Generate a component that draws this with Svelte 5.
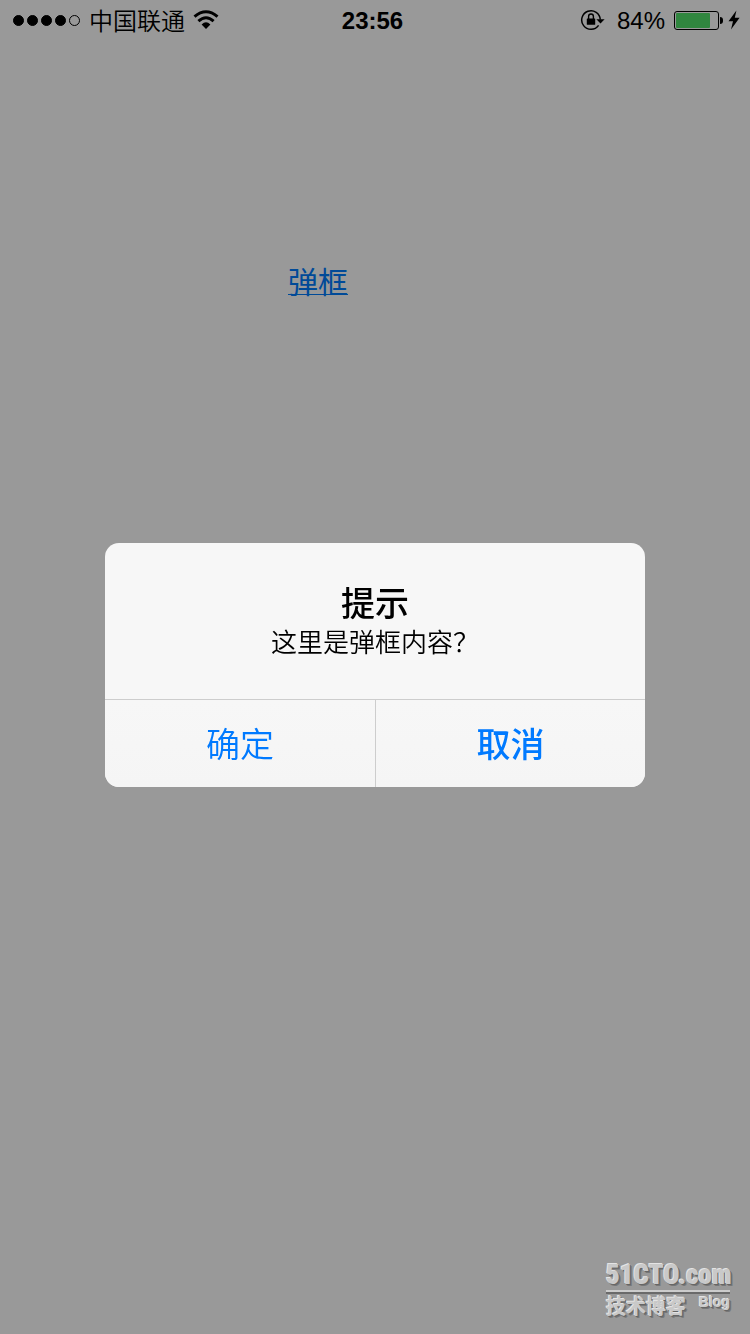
<script lang="ts">
  interface Props {
    carrier?: string;
    time?: string;
    battery?: number;
  }

  let { carrier = '中国联通', time = '23:56', battery = 84 }: Props = $props();

  let open = $state(true);

  const signal = [true, true, true, true, false];

  function show(event: MouseEvent) {
    event.preventDefault();
    open = true;
  }

  function close() {
    open = false;
  }
</script>

<div class="screen">
  <header class="status-bar">
    <div class="status-left">
      <span class="signal">
        {#each signal as on}
          <span class="signal-dot" class:on></span>
        {/each}
      </span>
      <span class="carrier">{carrier}</span>
      <svg class="wifi" width="26" height="20" viewBox="0 0 26 20" aria-hidden="true">
        <path d="M1.5 6.6 Q13 -3.2 24.5 6.6" fill="none" stroke="#000" stroke-width="3" />
        <path d="M5.4 11.2 Q13 4.4 20.6 11.2" fill="none" stroke="#000" stroke-width="3" />
        <path d="M8.6 14.6 Q13 10 17.4 14.6 L13 19 Z" />
      </svg>
    </div>
    <span class="time">{time}</span>
    <div class="status-right">
      <svg class="lock" width="25" height="22" viewBox="0 0 25 22" aria-hidden="true">
        <path d="M18.6 16.4 A9.3 9.3 0 1 1 20.3 10.6" fill="none" stroke="#000" stroke-width="1.5" />
        <path d="M16.4 10.2 H24.6 L20.5 14.4 Z" />
        <rect x="6.8" y="9.4" width="8.4" height="6.4" rx="0.6" />
        <path d="M8.6 10 V7.4 A2.4 2.4 0 0 1 13.4 7.4 V10" fill="none" stroke="#000" stroke-width="1.4" />
      </svg>
      <span class="percent">{battery}%</span>
      <span class="battery">
        <span class="battery-body">
          <span class="battery-level" style="width: {battery}%"></span>
        </span>
        <span class="battery-cap"></span>
      </span>
      <svg class="bolt" width="12" height="20" viewBox="0 0 12 20" aria-hidden="true">
        <path d="M8.4 0.5 L0.5 11.2 H5 L3 19.5 L11.6 7.8 H6.8 Z" />
      </svg>
    </div>
  </header>

  <main class="content">
    <a class="trigger" href="#alert" onclick={show}>弹框</a>
  </main>

  <footer class="watermark">
    <div class="brand">51CTO.com</div>
    <div class="brand-sub">
      <span class="brand-cn">技术博客</span>
      <span class="brand-blog">Blog</span>
    </div>
  </footer>

  {#if open}
    <div class="overlay">
      <div class="alert" role="alertdialog" aria-labelledby="alert-title" aria-describedby="alert-text">
        <div class="alert-body">
          <h1 id="alert-title">提示</h1>
          <p id="alert-text">这里是弹框内容？</p>
        </div>
        <div class="alert-actions">
          <button type="button" onclick={close}>确定</button>
          <button type="button" class="preferred" onclick={close}>取消</button>
        </div>
      </div>
    </div>
  {/if}
</div>

<style>
  :global(body) {
    background: #999;
  }

  .screen {
    display: flex;
    flex-direction: column;
    box-sizing: border-box;
    min-height: 100vh;
    background: #999;
    color: #000;
    font-family: "Liberation Sans", "Noto Sans CJK SC", sans-serif;
  }

  .status-bar {
    display: grid;
    grid-template-columns: 1fr auto 1fr;
    align-items: center;
    height: 40px;
    padding: 0 10px 0 13px;
    font-size: 24px;
    line-height: 38px;
  }

  .status-left,
  .status-right {
    display: flex;
    align-items: center;
  }

  .status-right {
    justify-content: flex-end;
  }

  .signal {
    display: flex;
    gap: 3px;
  }

  .signal-dot {
    box-sizing: border-box;
    width: 11px;
    height: 11px;
    border: 1px solid #000;
    border-radius: 50%;
  }

  .signal-dot.on {
    background: #000;
  }

  .carrier {
    margin: 0 8px 0 9px;
    font-family: "Noto Sans CJK SC", sans-serif;
    font-weight: 350;
  }

  .time {
    margin-right: 8px;
    padding-top: 2px;
    font-weight: bold;
  }

  .percent {
    margin: 0 9px 0 12px;
    padding-top: 2px;
  }

  .battery {
    display: flex;
    align-items: center;
    gap: 1px;
  }

  .battery-body {
    box-sizing: border-box;
    width: 45px;
    height: 19px;
    padding: 1px;
    border: 1px solid #000;
    border-radius: 3px;
  }

  .battery-level {
    display: block;
    height: 15px;
    border-radius: 1px;
    background: #30863f;
  }

  .battery-cap {
    width: 3px;
    height: 7px;
    border-radius: 0 3px 3px 0;
    background: #000;
  }

  .bolt {
    margin-left: 5px;
  }

  .content {
    flex: 1;
    padding: 218px 0 0 288px;
  }

  .trigger {
    color: #004a98;
    font-family: "Noto Sans CJK SC", sans-serif;
    font-size: 30px;
    line-height: 44px;
    text-decoration: underline;
    text-decoration-thickness: 1px;
    text-underline-offset: 1px;
    text-decoration-skip-ink: none;
  }

  .overlay {
    position: fixed;
    inset: 0;
    display: flex;
    align-items: center;
    justify-content: center;
    padding-bottom: 4px;
  }

  .alert {
    width: 72%;
    overflow: hidden;
    border-radius: 14px;
    background: #f7f7f7;
    font-family: "Noto Sans CJK SC", sans-serif;
  }

  .alert-body {
    padding: 38px 30px 40px;
    text-align: center;
  }

  h1 {
    margin: 0;
    font-size: 34px;
    font-weight: 500;
    line-height: 42px;
  }

  p {
    margin: 0;
    font-size: 26px;
    font-weight: 350;
    line-height: 36px;
  }

  .alert-actions {
    display: grid;
    grid-template-columns: 1fr 1fr;
    border-top: 1px solid #cdcdcd;
  }

  button {
    height: 87px;
    padding: 0 0 2px;
    border: 0;
    background: linear-gradient(#f7f7f7, #f5f5f5);
    color: #007aff;
    font-family: inherit;
    font-size: 34px;
    font-weight: 350;
  }

  button + button {
    border-left: 1px solid #cdcdcd;
  }

  .preferred {
    font-weight: 500;
  }

  .watermark {
    align-self: flex-end;
    width: 124px;
    padding: 0 20px 15px 0;
    color: #c9c9c9;
    font-weight: bold;
    text-shadow: -1px -1px 0 #e4e4e4, 1px 1px 0 #666, 2px 2px 0 #777;
  }

  .brand {
    border-bottom: 2px solid #ccc;
    box-shadow: 0 2px 0 #6a6a6a;
    font-family: "Roboto Condensed", Roboto, sans-serif;
    font-size: 27px;
    font-weight: 900;
    line-height: 30px;
    white-space: nowrap;
  }

  .brand-sub {
    display: flex;
    justify-content: space-between;
    line-height: 27px;
  }

  .brand-cn {
    font-family: "Noto Sans CJK SC", sans-serif;
    font-size: 20px;
  }

  .brand-blog {
    font-size: 14px;
    line-height: 20px;
  }
</style>
